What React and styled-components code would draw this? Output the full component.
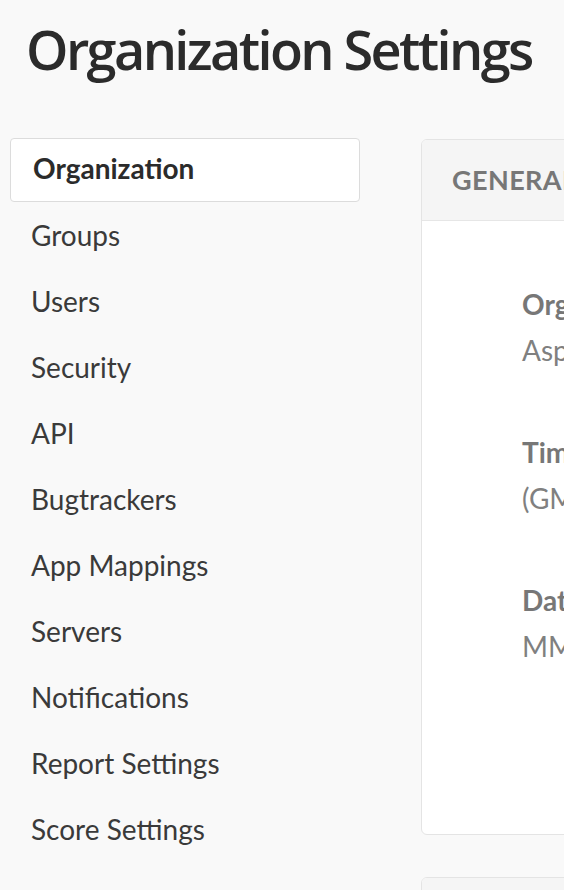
import React from 'react';
import styled, { createGlobalStyle } from 'styled-components';

const GlobalStyle = createGlobalStyle`
  html, body {
    margin: 0;
    padding: 0;
    background: #f9f9f9;
    font-family: 'Lato', 'Open Sans', sans-serif;
    overflow: hidden;
  }
`;

const Page = styled.div`
  width: 564px;
  height: 890px;
  overflow: hidden;
`;

const Title = styled.h1`
  margin: 0;
  padding: 17px 0 0 26px;
  height: 116px;
  box-sizing: border-box;
  font-family: 'Open Sans', sans-serif;
  font-weight: 600;
  font-size: 54px;
  line-height: 64px;
  letter-spacing: -2.6px;
  color: #2b2b2b;
  white-space: nowrap;
`;

const Columns = styled.div`
  display: flex;
  align-items: flex-start;
  gap: 61px;
  padding-left: 10px;
  padding-top: 22px;
`;

const Sidebar = styled.nav`
  flex: 0 0 350px;
  display: flex;
  flex-direction: column;
`;

const NavItem = styled.a`
  display: block;
  box-sizing: border-box;
  height: ${(p) => (p.$active ? '64px' : '66px')};
  line-height: ${(p) => (p.$active ? '58px' : '66px')};
  padding-left: ${(p) => (p.$active ? '22px' : '21px')};
  font-size: 28px;
  font-weight: ${(p) => (p.$active ? 700 : 400)};
  color: ${(p) => (p.$active ? '#2b2b2b' : '#3a3a3a')};
  background: ${(p) => (p.$active ? '#fff' : 'transparent')};
  border: ${(p) => (p.$active ? '1px solid #dcdcdc' : 'none')};
  border-radius: 4px;
  text-decoration: none;
  white-space: nowrap;
`;

const Content = styled.div`
  flex: 0 0 720px;
  display: flex;
  flex-direction: column;
  gap: 42px;
  padding-top: 1px;
`;

const Card = styled.section`
  background: #fff;
  border: 1px solid #e4e4e4;
  border-radius: 6px;
  overflow: hidden;
`;

const CardHeader = styled.header`
  height: 81px;
  box-sizing: border-box;
  padding-left: 30px;
  background: #f5f5f5;
  border-bottom: 1px solid #e6e6e6;
  font-size: 27px;
  font-weight: 700;
  line-height: 80px;
  color: #777;
  text-transform: uppercase;
  letter-spacing: 0.4px;
`;

const CardBody = styled.div`
  padding: 60px 0 165px 100px;
`;

const Field = styled.div`
  margin-bottom: 56px;

  &:last-child {
    margin-bottom: 0;
  }
`;

const Label = styled.div`
  font-size: 28px;
  line-height: 46px;
  font-weight: 700;
  color: #777;
  white-space: nowrap;
`;

const Value = styled.div`
  font-size: 28px;
  line-height: 46px;
  color: #808080;
  white-space: nowrap;
`;

const navItems = [
  'Organization',
  'Groups',
  'Users',
  'Security',
  'API',
  'Bugtrackers',
  'App Mappings',
  'Servers',
  'Notifications',
  'Report Settings',
  'Score Settings',
];

const fields = [
  { label: 'Organization Name', value: 'Aspect Security' },
  { label: 'Timezone', value: '(GMT-05:00) Eastern Time (US & Canada)' },
  { label: 'Date Format', value: 'MM/DD/YYYY' },
];

export default function App() {
  return (
    <Page>
      <GlobalStyle />
      <Title>Organization Settings</Title>
      <Columns>
        <Sidebar>
          {navItems.map((item, i) => (
            <NavItem key={item} href="#" $active={i === 0}>
              {item}
            </NavItem>
          ))}
        </Sidebar>
        <Content>
          <Card>
            <CardHeader>General</CardHeader>
            <CardBody>
              {fields.map((f) => (
                <Field key={f.label}>
                  <Label>{f.label}</Label>
                  <Value>{f.value}</Value>
                </Field>
              ))}
            </CardBody>
          </Card>
          <Card>
            <CardHeader>Notifications</CardHeader>
            <CardBody />
          </Card>
        </Content>
      </Columns>
    </Page>
  );
}
